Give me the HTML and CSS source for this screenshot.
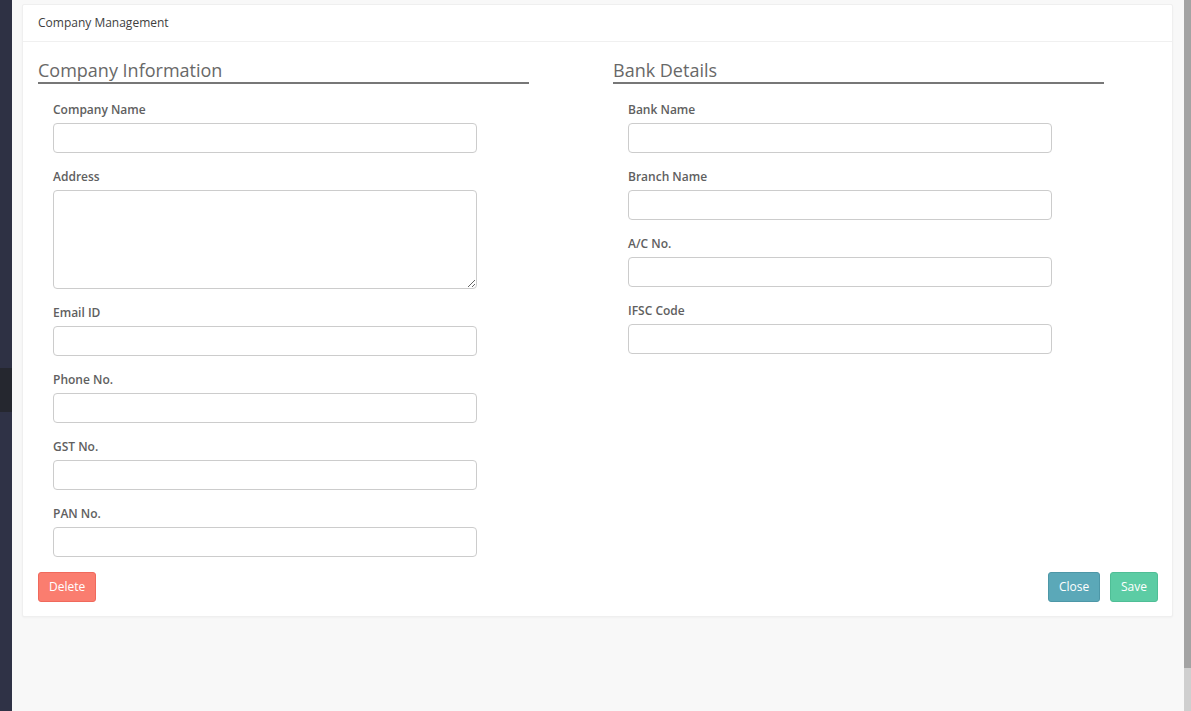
FILE: index.html
```html
<!DOCTYPE html>
<html>
<head>
<meta charset="utf-8">
<title>Company Management</title>
<link rel="stylesheet" href="styles.css">
</head>
<body>
<div class="app">
  <div class="sidebar">
    <div class="sb-top"></div>
    <div class="sb-active"></div>
    <div class="sb-rest"></div>
  </div>
  <main class="main">
    <section class="card">
      <div class="card-header">Company Management</div>
      <div class="card-body">
        <div class="columns">
          <div class="col">
            <h4 class="section-title">Company Information</h4>
            <div class="fields">
              <div class="form-group"><label>Company Name</label><input type="text" class="form-control"></div>
              <div class="form-group"><label>Address</label><textarea class="form-control area"></textarea></div>
              <div class="form-group"><label>Email ID</label><input type="text" class="form-control"></div>
              <div class="form-group"><label>Phone No.</label><input type="text" class="form-control"></div>
              <div class="form-group"><label>GST No.</label><input type="text" class="form-control"></div>
              <div class="form-group"><label>PAN No.</label><input type="text" class="form-control"></div>
            </div>
          </div>
          <div class="col">
            <h4 class="section-title">Bank Details</h4>
            <div class="fields">
              <div class="form-group"><label>Bank Name</label><input type="text" class="form-control"></div>
              <div class="form-group"><label>Branch Name</label><input type="text" class="form-control"></div>
              <div class="form-group"><label>A/C No.</label><input type="text" class="form-control"></div>
              <div class="form-group"><label>IFSC Code</label><input type="text" class="form-control"></div>
            </div>
          </div>
        </div>
        <div class="actions">
          <button class="btn btn-delete">Delete</button>
          <div class="actions-right">
            <button class="btn btn-close">Close</button>
            <button class="btn btn-save">Save</button>
          </div>
        </div>
      </div>
    </section>
  </main>
  <div class="scrollbar">
    <div class="thumb"></div>
    <div class="track"></div>
  </div>
</div>
</body>
</html>
```

FILE: styles.css
```css
* { box-sizing: border-box; }
html, body { margin: 0; padding: 0; height: 100%; }
body {
  font-family: "Open Sans", "Noto Sans", sans-serif;
  background: #f7f7f7;
  color: #555;
  overflow: hidden;
}
.app {
  display: flex;
  height: 711px;
  width: 1191px;
}
.sidebar {
  width: 12px;
  flex: 0 0 12px;
  display: flex;
  flex-direction: column;
  background: #2e3144;
}
.sb-top { height: 368px; background: #2e3144; }
.sb-active { height: 44px; background: #25272f; }
.sb-rest { flex: 1; background: #2f3246; }
.main {
  flex: 1;
  padding: 4px 11px 0 10px;
  background: #f8f8f8;
}
.scrollbar {
  width: 7px;
  flex: 0 0 7px;
  display: flex;
  flex-direction: column;
}
.thumb { height: 668px; background: #a3a3a3; }
.track { flex: 1; background: #cfcfcf; }

.card {
  background: #fff;
  border: 1px solid #efefef;
  border-radius: 2px;
  box-shadow: 0 1px 2px rgba(0,0,0,0.03);
}
.card-header {
  font-size: 12px;
  line-height: 17px;
  padding: 9px 15px 10px;
  color: #3e3e3e;
  font-weight: 400;
  border-bottom: 1px solid #f0f0f0;
}
.card-body {
  padding: 16px 14px 14px 15px;
}
.columns {
  display: grid;
  grid-template-columns: 491px 491px;
  column-gap: 84px;
}
.section-title {
  margin: 0;
  font-size: 18px;
  line-height: 22px;
  font-weight: 400;
  color: #686868;
  padding-top: 1px;
  padding-bottom: 1px;
  border-bottom: 2px solid #777;
}
.fields {
  padding: 17px 0 0 15px;
  width: 439px;
}
.form-group {
  margin-bottom: 15px;
}
.form-group label {
  display: block;
  font-size: 12px;
  line-height: 17px;
  font-weight: 600;
  color: #606060;
  margin-bottom: 5px;
}
.form-control {
  display: block;
  width: 424px;
  height: 30px;
  border: 1px solid #cccccc;
  border-radius: 4px;
  background: #fff;
  font-family: inherit;
  font-size: 12px;
  padding: 4px 8px;
  margin: 0;
}
.area {
  height: 99px;
  resize: vertical;
}
.actions {
  display: flex;
  justify-content: space-between;
  align-items: center;
}
.actions-right {
  display: flex;
  gap: 10px;
}
.btn {
  font-family: inherit;
  font-size: 12px;
  line-height: 16px;
  color: #fff;
  height: 30px;
  padding: 6px 10px;
  border-radius: 3px;
  border: 1px solid transparent;
  cursor: pointer;
}
.btn-delete { background: #fa7d6f; border-color: #f0695c; }
.btn-close { background: #5ba8b8; border-color: #4d97a7; width: 52px; }
.btn-save { background: #5ccca4; border-color: #4fbe96; width: 48px; }
```
